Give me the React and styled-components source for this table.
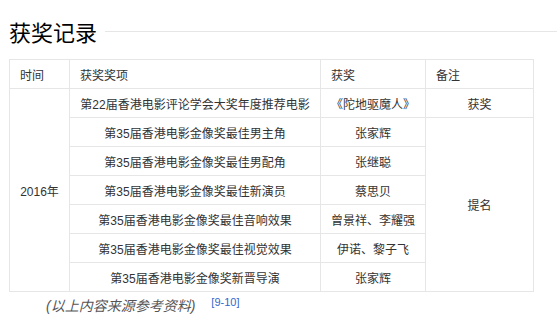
import React from 'react';
import styled, { createGlobalStyle } from 'styled-components';

const Global = createGlobalStyle`
  body {
    margin: 0;
    background: #fff;
    font-family: "Liberation Sans", "Noto Sans CJK SC", sans-serif;
    color: #333;
  }
`;

const Page = styled.div`
  padding: 16px 0 0 9px;
`;

const TitleBar = styled.div`
  display: flex;
  align-items: center;
  gap: 8px;
  height: 30px;
`;

const Title = styled.h2`
  margin: 0;
  font-size: 22px;
  font-weight: normal;
  color: #000;
  font-family: "Noto Sans CJK SC", sans-serif;
  line-height: 30px;
`;

const Rule = styled.div`
  flex: 1;
  height: 1px;
  background: #e6e6e6;
`;

const Table = styled.table`
  margin-top: 13px;
  width: 524px;
  border-collapse: collapse;
  font-size: 12px;
  table-layout: fixed;
`;

const Th = styled.th`
  border: 1px solid #e6e6e6;
  height: 28px;
  padding: 0 10px;
  text-align: left;
  font-weight: normal;
`;

const Td = styled.td`
  border: 1px solid #e6e6e6;
  height: 28px;
  padding: 0 4px;
  text-align: center;
  white-space: nowrap;
`;

const Caption = styled.div`
  display: flex;
  align-items: flex-start;
  gap: 16px;
  padding-left: 37px;
  margin-top: 3px;
`;

const Note = styled.span`
  font-style: italic;
  font-size: 14px;
  color: #555;
  line-height: 18px;
  margin-top: 2px;
`;

const Ref = styled.span`
  font-size: 11px;
  color: #3366cc;
  line-height: 14px;
`;

const widths = [60, 251, 105, 108];

const rows = [
  ['第35届香港电影金像奖最佳男主角', '张家辉'],
  ['第35届香港电影金像奖最佳男配角', '张继聪'],
  ['第35届香港电影金像奖最佳新演员', '蔡思贝'],
  ['第35届香港电影金像奖最佳音响效果', '曾景祥、李耀强'],
  ['第35届香港电影金像奖最佳视觉效果', '伊诺、黎子飞'],
  ['第35届香港电影金像奖新晋导演', '张家辉'],
];

export default function App() {
  return (
    <Page>
      <Global />
      <TitleBar>
        <Title>获奖记录</Title>
        <Rule />
      </TitleBar>
      <Table>
        <colgroup>
          {widths.map((w, i) => (
            <col key={i} style={{ width: w }} />
          ))}
        </colgroup>
        <thead>
          <tr>
            <Th>时间</Th>
            <Th>获奖奖项</Th>
            <Th>获奖</Th>
            <Th>备注</Th>
          </tr>
        </thead>
        <tbody>
          <tr>
            <Td rowSpan={7}>2016年</Td>
            <Td>第22届香港电影评论学会大奖年度推荐电影</Td>
            <Td>《陀地驱魔人》</Td>
            <Td>获奖</Td>
          </tr>
          {rows.map(([award, who], i) => (
            <tr key={i}>
              <Td>{award}</Td>
              <Td>{who}</Td>
              {i === 0 && <Td rowSpan={6}>提名</Td>}
            </tr>
          ))}
        </tbody>
      </Table>
      <Caption>
        <Note>(以上内容来源参考资料)</Note>
        <Ref>[9-10]</Ref>
      </Caption>
    </Page>
  );
}
